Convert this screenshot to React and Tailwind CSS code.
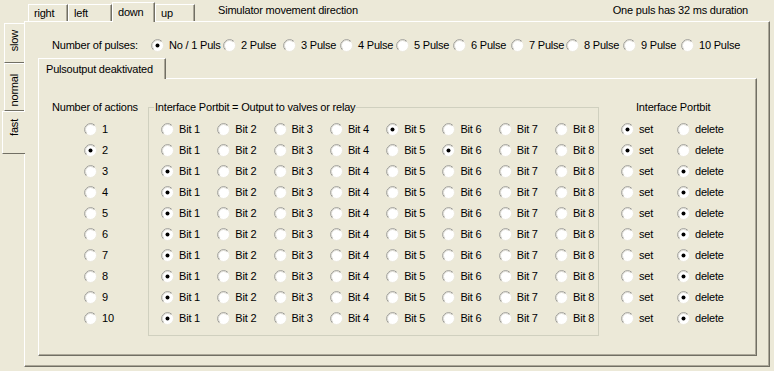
import clsx from "clsx";

const actions = [
  { n: 1, bit: 5, set: true },
  { n: 2, bit: 6, set: true },
  { n: 3, bit: 1, set: false },
  { n: 4, bit: 1, set: false },
  { n: 5, bit: 1, set: false },
  { n: 6, bit: 1, set: false },
  { n: 7, bit: 1, set: false },
  { n: 8, bit: 1, set: false },
  { n: 9, bit: 1, set: false },
  { n: 10, bit: 1, set: false },
];

const pulses = [
  ["No / 1 Puls", "w-[72px]"],
  ["2 Pulse", "w-[60px]"],
  ["3 Pulse", "w-[57px]"],
  ["4 Pulse", "w-[56px]"],
  ["5 Pulse", "w-[57px]"],
  ["6 Pulse", "w-[58px]"],
  ["7 Pulse", "w-[55px]"],
  ["8 Pulse", "w-[57px]"],
  ["9 Pulse", "w-[58px]"],
  ["10 Pulse", ""],
];

const Radio = ({ on }) => (
  <svg className="shrink-0" width="13" height="13" viewBox="0 0 13 13">
    <circle cx="6.5" cy="6.5" r="6" fill="#fff" stroke="#ebe8dc" />
    <path d="M2.26 10.74A6 6 0 0 1 10.74 2.26" fill="none" stroke="#9b9b96" />
    <path d="M2.96 10.04A5 5 0 0 1 10.04 2.96" fill="none" stroke="#dad8d0" />
    {on && <circle cx="6.5" cy="6.5" r="2" fill="#000" />}
  </svg>
);

const Opt = ({ on, label, className }) => (
  <div className={clsx("flex items-center gap-[5px] whitespace-nowrap", className)}>
    <Radio on={on} />
    <span>{label}</span>
  </div>
);

const TopTab = ({ label, className, active }) => (
  <div
    className={clsx(
      "flex items-center pl-[5px] border-t border-l border-white border-r border-r-[#716F64] shadow-[inset_-1px_0_0_#ACA899] bg-[#ECE9D8]",
      active ? "h-[20px] -mb-px relative z-10" : "h-[17px]",
      className
    )}
  >
    {label}
  </div>
);

const SideTab = ({ label, className, active }) => (
  <div
    className={clsx(
      "flex flex-col items-center border-t border-l border-white border-b border-b-[#716F64] bg-[#ECE9D8]",
      active ? "ml-[2px] w-[23px] -mr-px relative z-10" : "ml-[4px] w-[20px]",
      className
    )}
  >
    <span className="[writing-mode:vertical-rl] rotate-180 leading-[13px]">{label}</span>
  </div>
);

const App = () => (
  <div className="w-[774px] h-[371px] bg-[#ECE9D8] text-[11px] tracking-[-0.2px] text-black font-['Liberation_Sans',Arial,sans-serif] flex flex-col overflow-hidden">
    <div className="h-[21px] flex items-end pl-[28px] shrink-0">
      <TopTab label="right" className="w-[40px]" />
      <TopTab label="left" className="w-[44px]" />
      <TopTab label="down" className="w-[43px]" active />
      <TopTab label="up" className="w-[40px]" />
      <div className="self-stretch flex items-center ml-[23px]">Simulator movement direction</div>
      <div className="self-stretch flex items-center ml-auto mr-[26px]">One puls has 32 ms duration</div>
    </div>

    <div className="flex flex-1 mb-[4px]">
      <div className="w-[24px] shrink-0 flex flex-col pt-[2px]">
        <SideTab label="slow" className="h-[40px] pt-[6px]" />
        <SideTab label="normal" className="h-[48px] pt-[10px]" />
        <SideTab label="fast" className="h-[43px] pt-[7px]" active />
      </div>

      <div className="flex-1 mr-[4px] flex flex-col border-t border-l border-white border-r border-b border-r-[#716F64] border-b-[#716F64] shadow-[inset_-1px_-1px_0_#ACA899]">
        <div className="mt-[16px] pl-[27px] h-[14px] flex items-center">
          <span className="w-[99px] shrink-0">Number of pulses:</span>
          {pulses.map(([label, w], i) => (
            <Opt key={label} label={label} on={i === 0} className={clsx("shrink-0", w)} />
          ))}
        </div>

        <div className="mt-[6px] ml-[13px] mr-[12px] mb-[10px] flex-1 flex flex-col">
          <div className="h-[21px] -mb-px w-[128px] relative z-10 flex items-center pl-[7px] bg-[#ECE9D8] border-t border-l border-white border-r border-r-[#716F64] shadow-[inset_-1px_0_0_#ACA899]">
            Pulsoutput deaktivated
          </div>
          <div className="flex-1 flex items-start border-t border-l border-white border-r border-b border-r-[#716F64] border-b-[#716F64] shadow-[inset_-1px_-1px_0_#ACA899]">
            <div className="w-[109px] shrink-0 pt-[22px]">
              <div className="pl-[13px] h-[13px] leading-[13px] whitespace-nowrap">Number of actions</div>
              <div className="mt-[5px] pl-[45px]">
                {actions.map((a) => (
                  <Opt key={a.n} label={a.n} on={a.n === 2} className="h-[21px]" />
                ))}
              </div>
            </div>

            <fieldset className="mt-[22px] w-[451px] shrink-0 border border-[#D0D0BF] pt-[5px] pb-[6px]">
              <legend className="ml-[5px] px-[1px] leading-[13px] whitespace-nowrap">
                Interface Portbit = Output to valves or relay
              </legend>
              <div className="ml-[12px] grid grid-cols-[repeat(7,56.3px)_auto] auto-rows-[21px]">
                {actions.map((a) =>
                  [1, 2, 3, 4, 5, 6, 7, 8].map((b) => (
                    <Opt key={`${a.n}-${b}`} label={`Bit ${b}`} on={a.bit === b} />
                  ))
                )}
              </div>
            </fieldset>

            <div className="ml-[22px] pt-[22px]">
              <div className="pl-[15px] h-[13px] leading-[13px] whitespace-nowrap">Interface Portbit</div>
              <div className="mt-[5px] grid grid-cols-[56px_auto] auto-rows-[21px]">
                {actions.map((a) => [
                  <Opt key={`${a.n}-s`} label="set" on={a.set} />,
                  <Opt key={`${a.n}-d`} label="delete" on={!a.set} />,
                ])}
              </div>
            </div>
          </div>
        </div>
      </div>
    </div>
  </div>
);

export default App;
